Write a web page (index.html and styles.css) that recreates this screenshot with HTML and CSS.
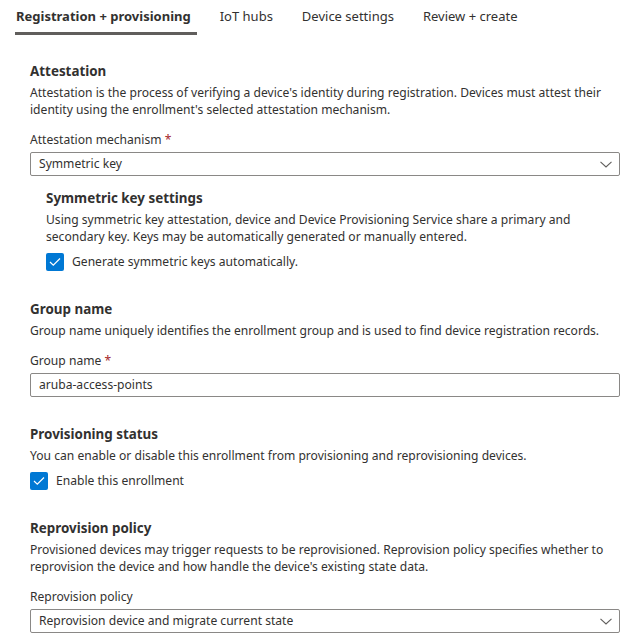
FILE: index.html
```html
<!DOCTYPE html>
<html>
<head>
<meta charset="utf-8">
<link rel="stylesheet" href="styles.css">
</head>
<body>
<div class="page">
  <nav class="tabs">
    <div class="tab active">Registration + provisioning</div>
    <div class="tab">IoT hubs</div>
    <div class="tab">Device settings</div>
    <div class="tab">Review + create</div>
  </nav>
  <div class="content">
    <section class="section first">
      <h2>Attestation</h2>
      <p class="desc">Attestation is the process of verifying a device's identity during registration. Devices must attest their identity using the enrollment's selected attestation mechanism.</p>
      <label class="label">Attestation mechanism <span class="req">*</span></label>
      <div class="field select">
        <span>Symmetric key</span>
        <svg class="chev" width="12" height="7" viewBox="0 0 12 7"><path d="M0.5 0.8 L6 6 L11.5 0.8" fill="none" stroke="#605e5c" stroke-width="1.1"/></svg>
      </div>
      <div class="sub">
        <h3>Symmetric key settings</h3>
        <p class="desc">Using symmetric key attestation, device and Device Provisioning Service share a primary and secondary key. Keys may be automatically generated or manually entered.</p>
        <div class="check">
          <span class="box"><svg width="12" height="10" viewBox="0 0 12 10"><path d="M1 5 L4.3 8.2 L11 1.5" fill="none" stroke="#fff" stroke-width="1.2"/></svg></span>
          <span>Generate symmetric keys automatically.</span>
        </div>
      </div>
    </section>
    <section class="section">
      <h2>Group name</h2>
      <p class="desc">Group name uniquely identifies the enrollment group and is used to find device registration records.</p>
      <label class="label">Group name <span class="req">*</span></label>
      <div class="field"><span>aruba-access-points</span></div>
    </section>
    <section class="section">
      <h2>Provisioning status</h2>
      <p class="desc">You can enable or disable this enrollment from provisioning and reprovisioning devices.</p>
      <div class="check">
        <span class="box"><svg width="12" height="10" viewBox="0 0 12 10"><path d="M1 5 L4.3 8.2 L11 1.5" fill="none" stroke="#fff" stroke-width="1.2"/></svg></span>
        <span>Enable this enrollment</span>
      </div>
    </section>
    <section class="section">
      <h2>Reprovision policy</h2>
      <p class="desc">Provisioned devices may trigger requests to be reprovisioned. Reprovision policy specifies whether to reprovision the device and how handle the device's existing state data.</p>
      <label class="label">Reprovision policy</label>
      <div class="field select">
        <span>Reprovision device and migrate current state</span>
        <svg class="chev" width="12" height="7" viewBox="0 0 12 7"><path d="M0.5 0.8 L6 6 L11.5 0.8" fill="none" stroke="#605e5c" stroke-width="1.1"/></svg>
      </div>
    </section>
  </div>
</div>
</body>
</html>
```
FILE: styles.css
```css
* { box-sizing: border-box; }
html, body { margin: 0; padding: 0; background: #fff; }
body {
  font-family: "Noto Sans", "Open Sans", sans-serif;
  font-size: 12.1px;
  color: #323130;
}
.page { padding: 0 20px 0 15px; }
.tabs {
  display: flex;
  height: 35px;
}
.tab {
  padding: 6px 0 0 1px;
  font-size: 13px;
  line-height: 20px;
  margin-right: 28px;
  color: #323130;
  height: 35px;
}
.tab.active {
  font-weight: 700;
  border-bottom: 3px solid #605e5c;
  padding: 6px 6px 0 1px;
  margin-right: 22px;
}
.content { padding-left: 15px; }
.section { margin-top: 27px; }
.section.first { margin-top: 26px; }
h2, h3 {
  margin: 0;
  font-size: 13.4px;
  font-weight: 700;
  line-height: 20px;
  color: #323130;
}
.sub { padding-left: 16px; margin-top: 12px; }
.desc {
  margin: 3px 0 0;
  line-height: 17px;
}
.label {
  display: block;
  margin-top: 12px;
  line-height: 20px;
}
.req { color: #a4262c; }
.field {
  margin-top: 2px;
  height: 24px;
  border: 1px solid #8a8886;
  border-radius: 2px;
  padding: 0 7px 0 8px;
  display: flex;
  align-items: center;
  justify-content: space-between;
  line-height: 20px;
}
.check {
  display: flex;
  align-items: center;
  gap: 8px;
  margin-top: 7px;
  line-height: 20px;
}
.box {
  width: 18px;
  height: 18px;
  background: #0078d4;
  border-radius: 2px;
  display: flex;
  align-items: center;
  justify-content: center;
}
```
